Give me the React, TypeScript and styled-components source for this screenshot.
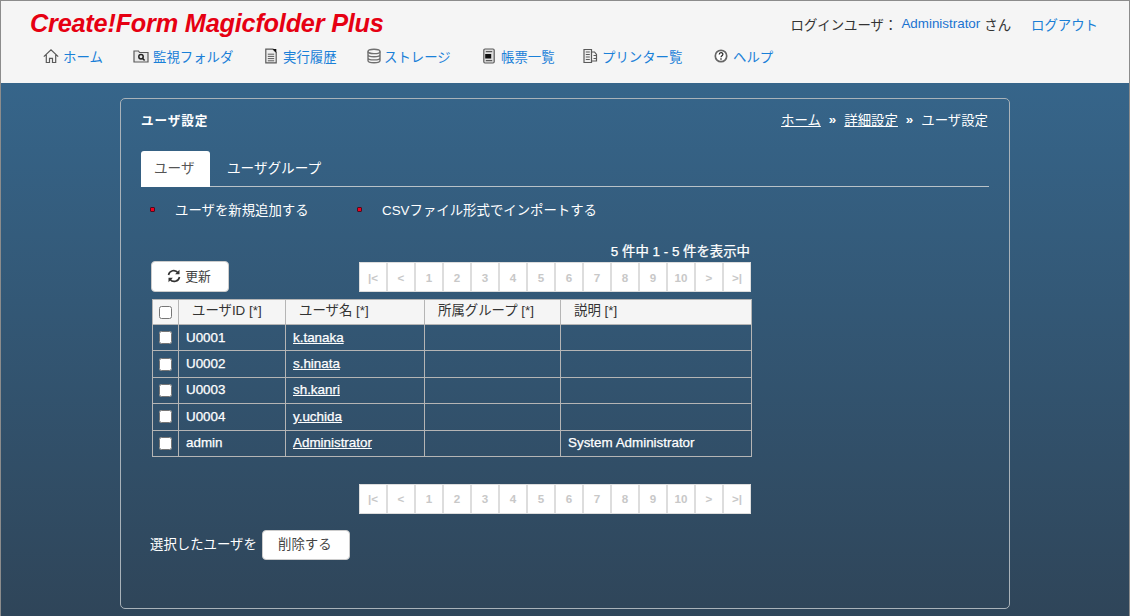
import React from "react";
import styled, { createGlobalStyle } from "styled-components";

const Global = createGlobalStyle`
  html, body { margin: 0; padding: 0; height: 100%; }
  body { font-family: "Liberation Sans", "Noto Sans CJK JP", sans-serif; font-size: 13.4px; color: #333; }
  * { box-sizing: border-box; }
`;
const Page = styled.div`
  width: 1130px; height: 616px; overflow: hidden;
  border: 1px solid #8c8c8c; border-bottom: 0;
  background: linear-gradient(180deg, #36658a 83px, #2f4559 616px);
`;
const Header = styled.header`
  height: 82px; background: #f5f5f5; padding: 6px 31px 0 29px;
`;
const TopRow = styled.div`display: flex; justify-content: space-between; align-items: center; height: 32px;`;
const Logo = styled.div`
  font: italic bold 25.3px "Liberation Sans", sans-serif; color: #e60012; letter-spacing: -0.22px; line-height: 30px;
`;
const LoginInfo = styled.div`display: flex; align-items: center; color: #333; font-size: 13.4px; margin-top: 1px;`;
const UserName = styled.a`color: #1a73d1; margin: 0 4px;`;
const Logout = styled.a`color: #1a7fd6; margin-left: 20px;`;
const Nav = styled.nav`display: flex; margin: 7px 0 0 13px; height: 20px; align-items: center;`;
const NavItem = styled.a<{ $w: number; $gap?: number }>`
  display: flex; align-items: center; gap: ${p => p.$gap ?? 4}px; width: ${p => p.$w}px; color: #1a80d8; font-size: 13.4px; white-space: nowrap;
  svg { flex: none; }
`;
const Panel = styled.main`
  margin: 15px 0 0 119px; width: 890px; height: 511px; border: 1px solid #a9b2b9; border-radius: 5px;
  padding: 11px 20px 0 20px; color: #fff;
`;
const PanelHead = styled.div`display: flex; justify-content: space-between; align-items: center; height: 18px;`;
const Title = styled.div`font-weight: bold; font-size: 12.6px; letter-spacing: 0.9px;`;
const Crumbs = styled.div`display: flex; align-items: center; gap: 8px; margin-right: 1px;`;
const CrumbLink = styled.a`color: #fff; text-decoration: underline;`;
const CrumbSep = styled.span`font-weight: bold;`;
const Tabs = styled.div`display: flex; margin-top: 23px; height: 36px; border-bottom: 1px solid #b9c2c8; width: 848px;`;
const Tab = styled.div<{ $active?: boolean }>`
  height: 36px; padding: 0 ${p => (p.$active ? 13 : 17)}px 4px; display: flex; align-items: center; font-size: 13.6px;
  width: ${p => (p.$active ? "69px" : "auto")}; border-radius: 3px 3px 0 0;
  background: ${p => (p.$active ? "#fff" : "transparent")}; color: ${p => (p.$active ? "#555" : "#fff")};
`;
const Actions = styled.div`display: flex; margin: 13px 0 0 9px; height: 18px; align-items: center;`;
const Action = styled.a<{ $w: number }>`display: flex; align-items: center; width: ${p => p.$w}px; color: #fff; gap: 20px;`;
const Bullet = styled.span`
  width: 5px; height: 5px; background: #f00020; border: 1px solid #4a1020; border-radius: 1px; flex: none; margin: 1px 0 0 0;
`;
const Count = styled.div`margin: 26px 0 0; width: 609px; text-align: right; font-size: 13.4px; line-height: 16px; -webkit-text-stroke: 0.25px #fff;`;
const ToolRow = styled.div`display: flex; justify-content: space-between; width: 600px; margin: 1px 0 0 10px; height: 30px;`;
const RefreshBtn = styled.button`
  width: 78px; height: 31px; background: #fff; border: 1px solid #ccc; border-radius: 4px; color: #444; font: inherit; font-size: 12.8px;
  display: flex; align-items: center; justify-content: center; gap: 4px; padding: 0 2px 2px 0;
`;
const Pager = styled.div`display: flex; height: 30px; margin-top: 1px;`;
const PageCell = styled.span`
  width: 28px; height: 30px; background: #fff; border: 1px solid #ddd; color: #c8c8c8; font-size: 11.6px; font-weight: bold;
  display: flex; align-items: center; justify-content: center;
`;
const PagerBottom = styled(Pager)`margin: 27px 0 0 218px; width: 392px;`;
const Table = styled.table`
  border-collapse: collapse; table-layout: fixed; width: 599px; margin: 8px 0 0 11px;
  th, td { border: 1px solid #b5b5b5; padding: 0; }
`;
const Th = styled.th`
  background: #f5f5f5; color: #333; font-weight: normal; height: 25px; text-align: left; padding: 0 0 2px 13px !important; font-size: 13.4px; line-height: 18px;
`;
const CheckTh = styled.th`background: #f5f5f5; height: 25px;`;
const Td = styled.td`height: 26.4px; padding: 0 0 0 7px !important; color: #fff; font-size: 13.4px; line-height: 18px; -webkit-text-stroke: 0.25px #fff;`;
const CheckTd = styled.td``;
const Box = styled.input`width: 13px; height: 13px; margin: 0 0 0 6px; display: block;`;
const Link = styled.a`color: #fff; text-decoration: underline;`;
const Bottom = styled.div`display: flex; align-items: center; margin: 16px 0 0 9px; gap: 5px;`;
const BottomLabel = styled.span`padding-bottom: 3px;`;
const DeleteBtn = styled.button`
  width: 88px; height: 30px; background: #fff; border: 1px solid #ccc; border-radius: 4px; color: #444; font: inherit; padding: 0 2px 3px 0;
`;

const I = { width: 16, height: 16, viewBox: "0 0 16 16", fill: "none", stroke: "#5a5a5a", strokeWidth: 1.2 } as const;
const HomeIcon = () => <svg {...I}><path d="M.8 8.600 8 1.800l7.200 6.800M3.300 6.800v7.700h3.200v-4.200h3v4.200h3.200V6.800" /></svg>;
const FolderIcon = () => <svg {...I}><path d="M1 3h4.500l1 1.500H15v9.500H1z" fill="#e8e8e8" /><circle cx="8" cy="8.800" r="2.200" stroke="#222" strokeWidth="1.500" /><path d="m9.600 10.500 2 2" stroke="#222" strokeWidth="1.600" /></svg>;
const DocIcon = () => <svg {...I}><path d="M2.800 1.200h7.200l3.200 3.200v10.400H2.800z" fill="#eee" /><path d="M9.500 1h3.800v3.800z" fill="#111" stroke="none" /><path d="M4.800 6.200h6.400M4.800 8.400h6.400M4.800 10.600h6.400M4.800 12.800h6.400" strokeWidth="1" /></svg>;
const DbIcon = () => <svg {...I} strokeWidth={1.4} stroke="#707070"><ellipse cx="8" cy="3.400" rx="6" ry="2.200" /><path d="M2 3.400v9.200c0 1.200 2.700 2.200 6 2.200s6-1 6-2.200V3.400M2 6.600c0 1.200 2.700 2.200 6 2.200s6-1 6-2.200M2 9.700c0 1.200 2.700 2.200 6 2.200s6-1 6-2.200" /></svg>;
const FormIcon = () => <svg {...I}><rect x="2.800" y="1" width="10.400" height="14" rx="1.200" fill="#ddd" /><path d="M4.800 3.600h6.400" /><rect x="4.200" y="6" width="6" height="4.500" fill="#111" stroke="none" /><path d="M4.800 12.600h6.400" /></svg>;
const PrinterIcon = () => <svg {...I}><path d="M2 1.500h7.500v13H2z" fill="#eee" /><path d="M3.800 4h4M3.800 6.500h4M3.800 9h4M3.800 11.500h4" strokeWidth="1" /><path d="M9.500 4h3l2 2.500v6.500h-5M11.500 7.500h3M11.500 10.500h3" /></svg>;
const HelpIcon = () => <svg {...I}><circle cx="8" cy="8" r="5.700" strokeWidth="1.700" fill="#fff" stroke="#666" /><path d="M6.200 6.500c0-2.400 3.700-2.400 3.700-.2 0 1.400-1.900 1.500-1.900 3" stroke="#222" strokeWidth="1.200" /><path d="M8 10.300v1.500" stroke="#222" strokeWidth="1.300" /></svg>;
const RefreshIcon = () => (
  <svg width="14" height="14" viewBox="0 0 14 14" fill="none" stroke="#333" strokeWidth="1.600">
    <path d="M1.500 6a5.300 5.300 0 0 1 9.500-2.200M12.500 8a5.300 5.300 0 0 1-9.500 2.200" />
    <path d="M12.500 .8v4.400H8.100z" fill="#333" stroke="none" />
    <path d="M1.500 13.200V8.800h4.400z" fill="#333" stroke="none" />
  </svg>
);

const navs: [React.ReactNode, string, number, number?][] = [
  [<HomeIcon />, "ホーム", 90], [<FolderIcon />, "監視フォルダ", 130], [<DocIcon />, "実行履歴", 103],
  [<DbIcon />, "ストレージ", 115, 2], [<FormIcon />, "帳票一覧", 101], [<PrinterIcon />, "プリンター覧", 131], [<HelpIcon />, "ヘルプ", 70],
];
const pages = ["|<", "<", "1", "2", "3", "4", "5", "6", "7", "8", "9", "10", ">", ">|"];
const users = [
  ["U0001", "k.tanaka", ""], ["U0002", "s.hinata", ""], ["U0003", "sh.kanri", ""],
  ["U0004", "y.uchida", ""], ["admin", "Administrator", "System Administrator"],
];
const PagerCells = () => <>{pages.map(p => <PageCell key={p}>{p}</PageCell>)}</>;

export default function App() {
  return (
    <Page>
      <Global />
      <Header>
        <TopRow>
          <Logo>Create!Form Magicfolder Plus</Logo>
          <LoginInfo>ログインユーザ： <UserName>Administrator</UserName> さん <Logout>ログアウト</Logout></LoginInfo>
        </TopRow>
        <Nav>{navs.map(([ic, t, w, g]) => <NavItem key={t} $w={w} $gap={g}>{ic}{t}</NavItem>)}</Nav>
      </Header>
      <Panel>
        <PanelHead>
          <Title>ユーザ設定</Title>
          <Crumbs><CrumbLink>ホーム</CrumbLink><CrumbSep>»</CrumbSep><CrumbLink>詳細設定</CrumbLink><CrumbSep>»</CrumbSep><span>ユーザ設定</span></Crumbs>
        </PanelHead>
        <Tabs><Tab $active>ユーザ</Tab><Tab>ユーザグループ</Tab></Tabs>
        <Actions>
          <Action $w={207}><Bullet />ユーザを新規追加する</Action>
          <Action $w={300}><Bullet />CSVファイル形式でインポートする</Action>
        </Actions>
        <Count>5 件中 1 - 5 件を表示中</Count>
        <ToolRow>
          <RefreshBtn><RefreshIcon />更新</RefreshBtn>
          <Pager><PagerCells /></Pager>
        </ToolRow>
        <Table>
          <colgroup><col width={26} /><col width={107} /><col width={139} /><col width={136} /><col width={191} /></colgroup>
          <thead><tr>
            <CheckTh><Box type="checkbox" /></CheckTh>
            <Th>ユーザID [*]</Th><Th>ユーザ名 [*]</Th><Th>所属グループ [*]</Th><Th>説明 [*]</Th>
          </tr></thead>
          <tbody>
            {users.map(u => (
              <tr key={u[0]}>
                <CheckTd><Box type="checkbox" /></CheckTd>
                <Td>{u[0]}</Td><Td><Link>{u[1]}</Link></Td><Td /><Td>{u[2]}</Td>
              </tr>
            ))}
          </tbody>
        </Table>
        <PagerBottom><PagerCells /></PagerBottom>
        <Bottom><BottomLabel>選択したユーザを</BottomLabel><DeleteBtn>削除する</DeleteBtn></Bottom>
      </Panel>
    </Page>
  );
}
